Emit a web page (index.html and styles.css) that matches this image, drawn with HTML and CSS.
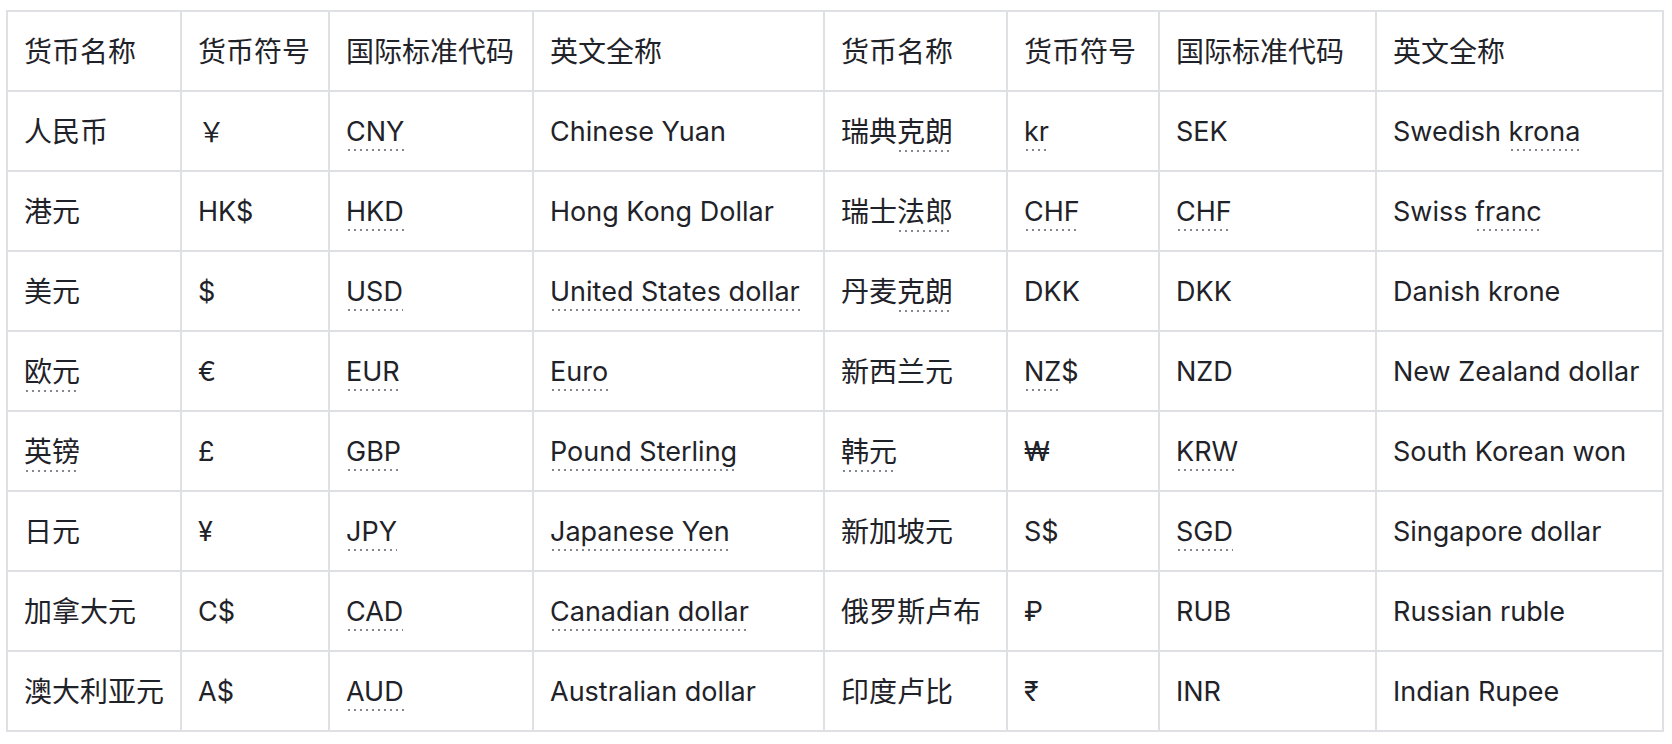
FILE: index.html
```html
<!DOCTYPE html>
<html lang="zh-CN">
<head>
<meta charset="utf-8">
<title>货币对照表</title>
<link rel="stylesheet" href="styles.css">
</head>
<body>
<table class="fx">
  <thead>
    <tr>
      <th class="c1">货币名称</th>
      <th class="c2">货币符号</th>
      <th class="c3">国际标准代码</th>
      <th class="c4">英文全称</th>
      <th class="c5">货币名称</th>
      <th class="c6">货币符号</th>
      <th class="c7">国际标准代码</th>
      <th class="c8">英文全称</th>
    </tr>
  </thead>
  <tbody>
    <tr>
      <td>人民币</td><td><span class="fw">￥</span></td><td><span class="dot">CNY</span></td><td>Chinese Yuan</td>
      <td>瑞典<span class="dot">克朗</span></td><td><span class="dot">kr</span></td><td>SEK</td><td>Swedish <span class="dot">krona</span></td>
    </tr>
    <tr>
      <td>港元</td><td>HK$</td><td><span class="dot">HKD</span></td><td>Hong Kong Dollar</td>
      <td>瑞士<span class="dot">法郎</span></td><td><span class="dot">CHF</span></td><td><span class="dot">CHF</span></td><td>Swiss <span class="dot">franc</span></td>
    </tr>
    <tr>
      <td>美元</td><td>$</td><td><span class="dot">USD</span></td><td><span class="dot">United States dollar</span></td>
      <td>丹麦<span class="dot">克朗</span></td><td>DKK</td><td>DKK</td><td>Danish krone</td>
    </tr>
    <tr>
      <td><span class="dot">欧元</span></td><td>€</td><td><span class="dot">EUR</span></td><td><span class="dot">Euro</span></td>
      <td>新西兰元</td><td><span class="dot">NZ</span>$</td><td>NZD</td><td>New Zealand dollar</td>
    </tr>
    <tr>
      <td><span class="dot">英镑</span></td><td>£</td><td><span class="dot">GBP</span></td><td><span class="dot">Pound Sterling</span></td>
      <td><span class="dot">韩元</span></td><td>₩</td><td><span class="dot">KRW</span></td><td>South Korean won</td>
    </tr>
    <tr>
      <td>日元</td><td>¥</td><td><span class="dot">JPY</span></td><td><span class="dot">Japanese Yen</span></td>
      <td>新加坡元</td><td>S$</td><td><span class="dot">SGD</span></td><td>Singapore dollar</td>
    </tr>
    <tr>
      <td>加拿大元</td><td>C$</td><td><span class="dot">CAD</span></td><td><span class="dot">Canadian dollar</span></td>
      <td>俄罗斯卢布</td><td>₽</td><td>RUB</td><td>Russian ruble</td>
    </tr>
    <tr>
      <td>澳大利亚元</td><td>A$</td><td><span class="dot">AUD</span></td><td>Australian dollar</td>
      <td>印度卢比</td><td>₹</td><td>INR</td><td>Indian Rupee</td>
    </tr>
  </tbody>
</table>
</body>
</html>
```

FILE: styles.css
```css
html, body {
  margin: 0;
  padding: 0;
  background: #ffffff;
}

body {
  padding: 10px 0 0 6px;
  font-family: Inter, "Noto Sans CJK SC", sans-serif;
  font-size: 27px;
  color: #1f2329;
}

.fx {
  border-collapse: separate;
  border-spacing: 0;
  table-layout: fixed;
  border-left: 2px solid #dfe0e4;
  border-top: 2px solid #dfe0e4;
}

.fx th,
.fx td {
  box-sizing: border-box;
  height: 80px;
  padding: 2px 0 0 16px;
  border-right: 2px solid #dfe0e4;
  border-bottom: 2px solid #dfe0e4;
  text-align: left;
  vertical-align: middle;
  font-weight: 400;
  white-space: nowrap;
  line-height: 1.3;
}

/* Chinese-language cells are set a touch larger */
.fx th,
.fx td:nth-child(1),
.fx td:nth-child(5) {
  font-size: 28px;
}

.c1 { width: 174px; }
.c2 { width: 148px; }
.c3 { width: 204px; }
.c4 { width: 291px; }
.c5 { width: 183px; }
.c6 { width: 152px; }
.c7 { width: 217px; }
.c8 { width: 287px; }

.dot {
  padding-bottom: 3px;
  background-image: linear-gradient(to right, #85888e 2px, transparent 2px);
  background-size: 6px 2px;
  background-repeat: repeat-x;
  background-position: 2px 100%;
}

.fw {
  font-family: "Noto Sans CJK SC", sans-serif;
}
```
